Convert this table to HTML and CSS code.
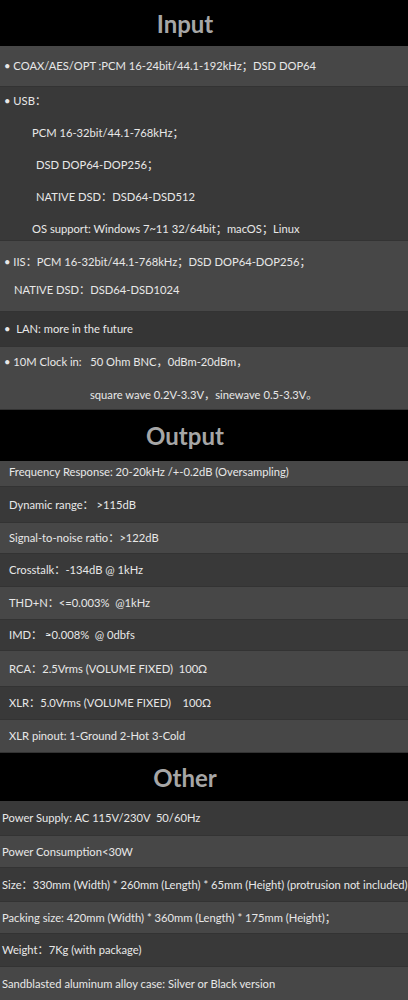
FILE: index.html
```html
<!DOCTYPE html>
<html lang="en">
<head>
<meta charset="utf-8">
<title>Specifications</title>
<link rel="stylesheet" href="styles.css">
</head>
<body>
<main class="specs">
  <section class="block">
    <h2 class="title title-input">Input</h2>
    <div class="row light h40 pad-bullet"><p class="line">• COAX/AES/OPT :PCM 16-24bit/44.1-192kHz；DSD DOP64</p></div>
    <div class="row dark pad-bullet usb">
      <p class="line">• USB：</p>
      <p class="line ind-a">PCM 16-32bit/44.1-768kHz；</p>
      <p class="line ind-b">DSD DOP64-DOP256；</p>
      <p class="line ind-b">NATIVE DSD：DSD64-DSD512</p>
      <p class="line ind-a">OS support: Windows 7~11 32/64bit；macOS；Linux</p>
    </div>
    <div class="row light pad-bullet iis">
      <p class="line">• IIS：PCM 16-32bit/44.1-768kHz；DSD DOP64-DOP256；</p>
      <p class="line ind-c">NATIVE DSD：DSD64-DSD1024</p>
    </div>
    <div class="row darker h35 pad-bullet"><p class="line">•&nbsp; LAN: more in the future</p></div>
    <div class="row light pad-bullet clock">
      <p class="line">• 10M Clock in:&nbsp;&nbsp; 50 Ohm BNC，0dBm-20dBm，</p>
      <p class="line ind-d">square wave 0.2V-3.3V，sinewave 0.5-3.3V。</p>
    </div>
  </section>

  <section class="block">
    <h2 class="title title-output">Output</h2>
    <div class="row light h26 pad-out top"><p class="line">Frequency Response: 20-20kHz /+-0.2dB (Oversampling)</p></div>
    <div class="row dark h36 pad-out"><p class="line">Dynamic range：&nbsp;&gt;115dB</p></div>
    <div class="row light h31 pad-out"><p class="line">Signal-to-noise ratio：&gt;122dB</p></div>
    <div class="row dark h33 pad-out"><p class="line">Crosstalk：-134dB @ 1kHz</p></div>
    <div class="row light h33 pad-out"><p class="line">THD+N：&lt;=0.003%&nbsp; @1kHz</p></div>
    <div class="row dark h31 pad-out"><p class="line">IMD：&nbsp;≈0.008%&nbsp; @ 0dbfs</p></div>
    <div class="row light h36 pad-out"><p class="line">RCA：2.5Vrms (VOLUME FIXED)&nbsp; 100Ω</p></div>
    <div class="row dark h33 pad-out"><p class="line">XLR：5.0Vrms (VOLUME FIXED)&nbsp;&nbsp;&nbsp; 100Ω</p></div>
    <div class="row light h33 pad-out"><p class="line">XLR pinout: 1-Ground 2-Hot 3-Cold</p></div>
  </section>

  <section class="block">
    <h2 class="title title-other">Other</h2>
    <div class="row dark h35 pad-other"><p class="line">Power Supply: AC 115V/230V&nbsp; 50/60Hz</p></div>
    <div class="row light h32 pad-other"><p class="line">Power Consumption&lt;30W</p></div>
    <div class="row dark h34 pad-other"><p class="line">Size：330mm (Width) * 260mm (Length) * 65mm (Height) (protrusion not included)</p></div>
    <div class="row light h32 pad-other"><p class="line">Packing size: 420mm (Width) * 360mm (Length) * 175mm (Height)；</p></div>
    <div class="row dark h33 pad-other"><p class="line">Weight：7Kg (with package)</p></div>
    <div class="row light h34 pad-other"><p class="line">Sandblasted aluminum alloy case: Silver or Black version</p></div>
  </section>
</main>
</body>
</html>
```

FILE: styles.css
```css
* { box-sizing: border-box; }
html, body { margin: 0; padding: 0; background: #000; }
body {
  width: 408px;
  font-family: Lato, "Noto Sans CJK SC", sans-serif;
  font-size: 11.2px;
  color: #e8e8e8;
}
.specs { display: flex; flex-direction: column; }
.block { display: flex; flex-direction: column; }
.title {
  margin: 0;
  background: #000;
  color: #a6a6a6;
  font-family: Lato, sans-serif;
  font-weight: 700;
  font-size: 24px;
  text-align: center;
  padding-right: 38px;
  display: flex;
  align-items: center;
  justify-content: center;
}
.title-input { height: 46px; }
.title-output { height: 51px; }
.title-other { height: 48px; }

.row {
  display: flex;
  flex-direction: column;
  justify-content: center;
  border-bottom: 1px solid #333;
}
.row.top { justify-content: flex-start; padding-top: 3px; }
.light { background: #474747; }
.dark { background: #393939; }
.darker { background: #353535; }
.line { margin: 0; white-space: nowrap; line-height: 16px; }

.h26 { height: 26px; }
.h31 { height: 31px; }
.h32 { height: 32px; }
.h33 { height: 33px; }
.h34 { height: 34px; }
.h35 { height: 35px; }
.h36 { height: 36px; }
.h40 { height: 41px; }

.pad-bullet { padding-left: 4px; }
.pad-out { padding-left: 9px; }
.pad-other { padding-left: 2px; }

.usb { height: 154px; padding-top: 6px; gap: 16px; justify-content: flex-start; }
.iis { height: 71px; gap: 12px; }
.clock { height: 63px; gap: 17px; }

.ind-a { padding-left: 28px; }
.ind-b { padding-left: 32px; }
.ind-c { padding-left: 10px; }
.ind-d { padding-left: 86px; }
```
